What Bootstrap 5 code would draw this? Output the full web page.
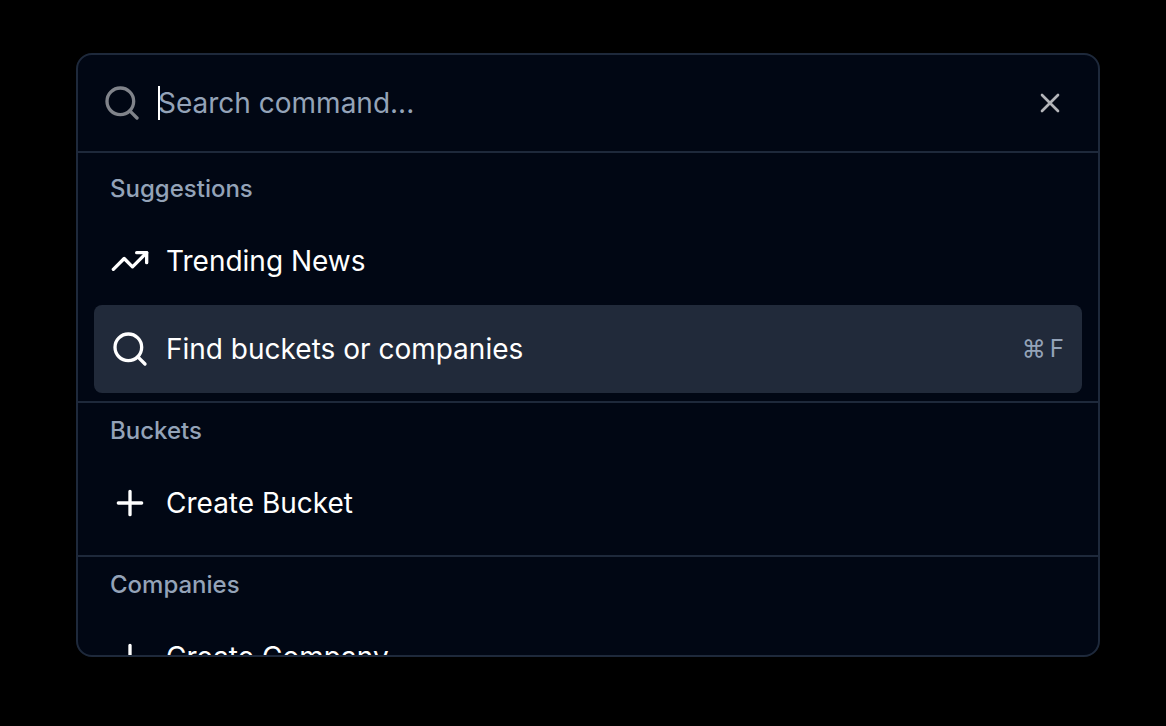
<!DOCTYPE html>
<html lang="en" data-bs-theme="dark">
<head>
<meta charset="utf-8">
<meta name="viewport" content="width=device-width, initial-scale=1">
<title>Command menu</title>
<link href="https://cdn.jsdelivr.net/npm/bootstrap@5.3.0/dist/css/bootstrap.min.css" rel="stylesheet">
<style>
  :root { --surface: #010714; --line: #1e293b; --muted: #94a3b8; --active: #212a3a; }
  body { background: #000; color: #fff; font-family: Inter, sans-serif; font-size: 28px; line-height: 40px; }
  .palette-page { padding: 53px 66px 24px 76px; }
  .palette { background: var(--surface); border: 2px solid var(--line); border-radius: 16px; overflow: hidden; }
  .palette-head { height: 98px; padding: 0 32px 0 24px; border-bottom: 2px solid var(--line); gap: 16px; }
  .palette-head > svg { opacity: .5; }
  .palette svg { flex: none; fill: none; stroke: currentColor; stroke-width: 2; stroke-linecap: round; stroke-linejoin: round; }
  .palette-input { font-size: 28px; line-height: 40px; color: #fff; outline: 0; caret-color: transparent; }
  .palette-input::placeholder { color: var(--muted); opacity: 1; }
  .caret { width: 2px; height: 34px; top: 3px; left: 0; background: #fff; }
  .close-btn { color: #fff; opacity: .7; line-height: 0; }
  .palette-list { max-height: 502px; overflow-y: auto; scrollbar-width: none; }
  .palette-list::-webkit-scrollbar { display: none; }
  .palette-group { padding: 0 16px 8px; }
  .palette-group:first-child { padding-top: 8px; }
  .palette-group + .palette-group { border-top: 2px solid var(--line); }
  .palette-group h2 { margin: 0; padding: 12px 16px; font-size: 24px; line-height: 32px; font-weight: 500; color: var(--muted); }
  .palette-item { padding: 24px 16px; gap: 16px; border: 0; border-radius: 8px; background: transparent; color: #fff; }
  .palette-item.active { background: var(--active); }
  .shortcut { gap: 4px; padding: 0 2px 0 0; font-family: inherit; font-size: 24px; line-height: 32px; color: var(--muted); background: none; }
</style>
</head>
<body>
<svg class="d-none" aria-hidden="true">
  <symbol id="i-search" viewBox="0 0 24 24"><circle cx="11" cy="11" r="8"/><path d="m21 21-4.3-4.3"/></symbol>
  <symbol id="i-trend" viewBox="0 0 24 24"><path d="m22 7-8.500 8.500-5-5L2 17"/><path d="M16 7h6v6"/></symbol>
  <symbol id="i-plus" viewBox="0 0 24 24"><path d="M5 12h14M12 5v14"/></symbol>
  <symbol id="i-x" viewBox="0 0 24 24"><path d="M18 6 6 18M6 6l12 12"/></symbol>
</svg>
<main class="palette-page">
  <div class="palette" role="dialog" aria-label="Command menu">
    <div class="palette-head d-flex align-items-center">
      <svg width="40" height="40" aria-hidden="true"><use href="#i-search"/></svg>
      <div class="position-relative d-flex flex-grow-1">
        <input class="palette-input w-100 p-0 border-0 bg-transparent" type="text" placeholder="Search command..." aria-label="Search command">
        <span class="caret position-absolute"></span>
      </div>
      <button type="button" class="close-btn p-0 border-0 bg-transparent" aria-label="Close"><svg width="32" height="32" aria-hidden="true"><use href="#i-x"/></svg></button>
    </div>
    <div class="palette-list">
      <section class="palette-group">
        <h2>Suggestions</h2>
        <button type="button" class="palette-item d-flex align-items-center w-100 text-start"><svg width="40" height="40" aria-hidden="true"><use href="#i-trend"/></svg><span>Trending News</span></button>
        <button type="button" class="palette-item active d-flex align-items-center w-100 text-start"><svg width="40" height="40" aria-hidden="true"><use href="#i-search"/></svg><span>Find buckets or companies</span><kbd class="shortcut ms-auto d-flex"><span>⌘</span><span>F</span></kbd></button>
      </section>
      <section class="palette-group">
        <h2>Buckets</h2>
        <button type="button" class="palette-item d-flex align-items-center w-100 text-start"><svg width="40" height="40" aria-hidden="true"><use href="#i-plus"/></svg><span>Create Bucket</span></button>
      </section>
      <section class="palette-group">
        <h2>Companies</h2>
        <button type="button" class="palette-item d-flex align-items-center w-100 text-start"><svg width="40" height="40" aria-hidden="true"><use href="#i-plus"/></svg><span>Create Company</span></button>
      </section>
    </div>
  </div>
</main>
<script src="https://cdn.jsdelivr.net/npm/bootstrap@5.3.0/dist/js/bootstrap.bundle.min.js"></script>
</body>
</html>
